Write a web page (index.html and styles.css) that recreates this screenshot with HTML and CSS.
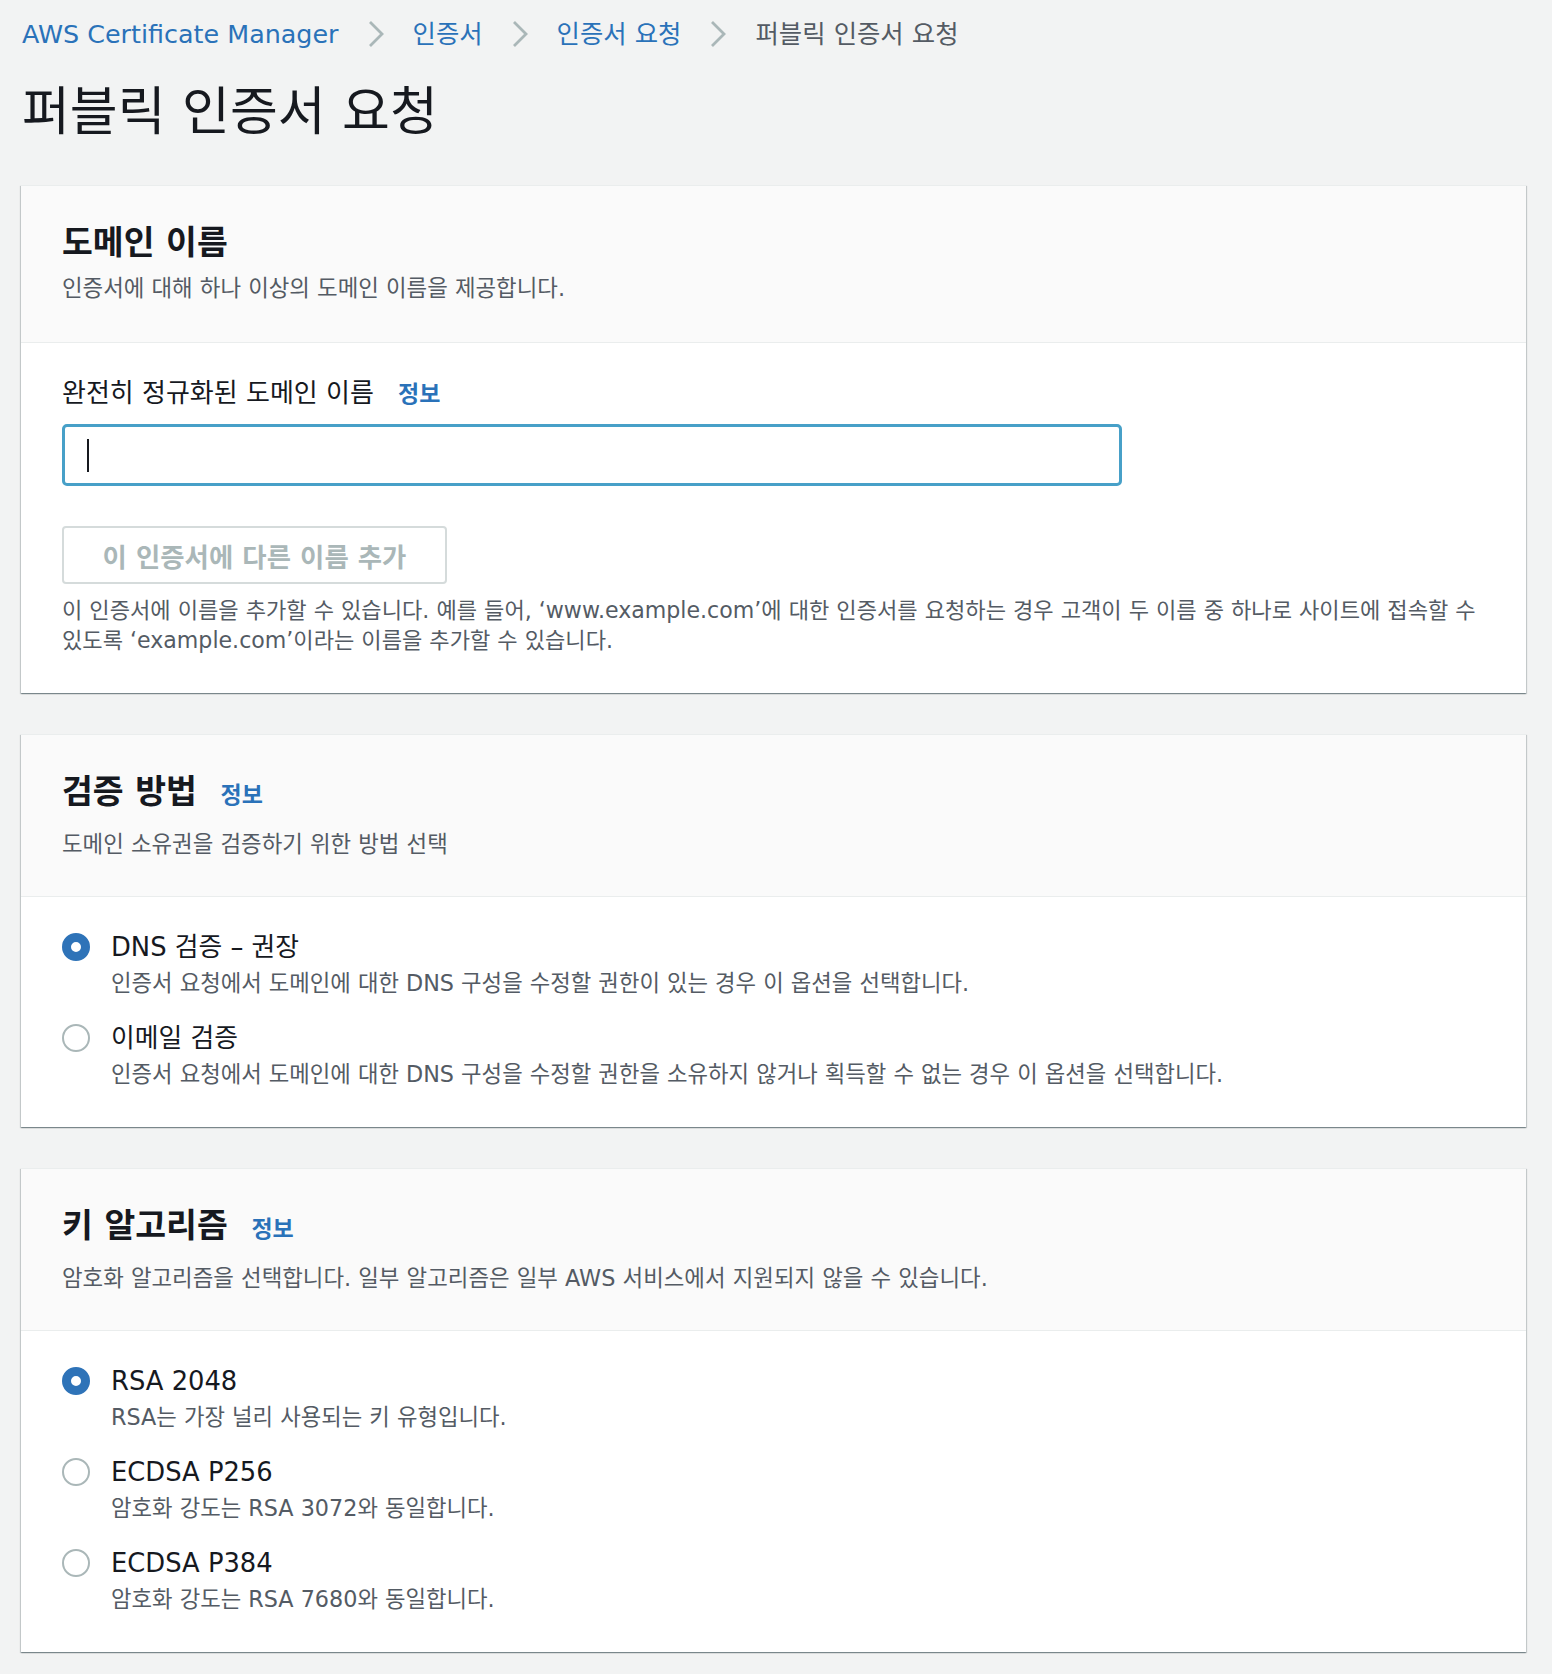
FILE: index.html
```html
<!DOCTYPE html>
<html lang="ko">
<head>
    <meta charset="UTF-8">
    <meta name="viewport" content="width=device-width, initial-scale=1.0">
    <title>퍼블릭 인증서 요청</title>
    <link rel="stylesheet" href="styles.css">
</head>
<body>
    <nav class="breadcrumb">
        <a href="#">AWS Certificate Manager</a>
        <svg class="chevron" viewBox="0 0 18 28"><polyline points="3,2 15,14 3,26" /></svg>
        <a href="#">인증서</a>
        <svg class="chevron" viewBox="0 0 18 28"><polyline points="3,2 15,14 3,26" /></svg>
        <a href="#">인증서 요청</a>
        <svg class="chevron" viewBox="0 0 18 28"><polyline points="3,2 15,14 3,26" /></svg>
        <span class="current">퍼블릭 인증서 요청</span>
    </nav>

    <h1 class="page-title">퍼블릭 인증서 요청</h1>

    <div class="card">
        <div class="card-header plain">
            <h2>도메인 이름</h2>
            <p class="desc">인증서에 대해 하나 이상의 도메인 이름을 제공합니다.</p>
        </div>
        <div class="card-body">
            <label class="field-label">완전히 정규화된 도메인 이름 <a class="info" href="#">정보</a></label>
            <div class="text-input"><span class="caret"></span></div>
            <button class="btn-disabled" disabled>이 인증서에 다른 이름 추가</button>
            <p class="help">이 인증서에 이름을 추가할 수 있습니다. 예를 들어, ‘www.example.com’에 대한 인증서를 요청하는 경우 고객이 두 이름 중 하나로 사이트에 접속할 수 있도록 ‘example.com’이라는 이름을 추가할 수 있습니다.</p>
        </div>
    </div>

    <div class="card">
        <div class="card-header">
            <h2>검증 방법 <a class="info" href="#">정보</a></h2>
            <p class="desc">도메인 소유권을 검증하기 위한 방법 선택</p>
        </div>
        <div class="card-body">
            <div class="radio-list">
                <div class="radio-item">
                    <span class="radio checked"></span>
                    <div>
                        <div class="radio-label">DNS 검증 – 권장</div>
                        <div class="radio-desc">인증서 요청에서 도메인에 대한 DNS 구성을 수정할 권한이 있는 경우 이 옵션을 선택합니다.</div>
                    </div>
                </div>
                <div class="radio-item">
                    <span class="radio"></span>
                    <div>
                        <div class="radio-label">이메일 검증</div>
                        <div class="radio-desc">인증서 요청에서 도메인에 대한 DNS 구성을 수정할 권한을 소유하지 않거나 획득할 수 없는 경우 이 옵션을 선택합니다.</div>
                    </div>
                </div>
            </div>
        </div>
    </div>

    <div class="card">
        <div class="card-header">
            <h2>키 알고리즘 <a class="info" href="#">정보</a></h2>
            <p class="desc">암호화 알고리즘을 선택합니다. 일부 알고리즘은 일부 AWS 서비스에서 지원되지 않을 수 있습니다.</p>
        </div>
        <div class="card-body">
            <div class="radio-list">
                <div class="radio-item">
                    <span class="radio checked"></span>
                    <div>
                        <div class="radio-label">RSA 2048</div>
                        <div class="radio-desc">RSA는 가장 널리 사용되는 키 유형입니다.</div>
                    </div>
                </div>
                <div class="radio-item">
                    <span class="radio"></span>
                    <div>
                        <div class="radio-label">ECDSA P256</div>
                        <div class="radio-desc">암호화 강도는 RSA 3072와 동일합니다.</div>
                    </div>
                </div>
                <div class="radio-item">
                    <span class="radio"></span>
                    <div>
                        <div class="radio-label">ECDSA P384</div>
                        <div class="radio-desc">암호화 강도는 RSA 7680와 동일합니다.</div>
                    </div>
                </div>
            </div>
        </div>
    </div>
</body>
</html>
```

FILE: styles.css
```css
body {
    margin: 0;
    padding: 17px 26px 20px 21px;
    background-color: #f2f3f3;
    color: #16191f;
    font-family: "DejaVu Sans", "Noto Sans CJK KR", sans-serif;
}

a {
    color: #2a72b9;
    text-decoration: none;
}

.breadcrumb {
    display: flex;
    align-items: center;
    gap: 28px;
    padding-left: 1px;
    font-size: 25.4px;
    line-height: 34px;
}
.breadcrumb .current {
    color: #545b64;
}
.chevron {
    width: 18px;
    height: 30px;
    fill: none;
    stroke: #aab7b8;
    stroke-width: 2.8;
}

.page-title {
    margin: 31px 0 43px 1px;
    font-size: 52px;
    font-weight: normal;
    line-height: 60px;
}

.card {
    margin-bottom: 41px;
    background-color: #fff;
    border-top: 1px solid #eaeded;
    box-shadow: 0 1px 1px 0 rgba(0, 28, 36, 0.3), 1px 1px 1px 0 rgba(0, 28, 36, 0.15), -1px 1px 1px 0 rgba(0, 28, 36, 0.15);
}
.card-header {
    padding: 35px 40px 37px 41px;
    background-color: #fafafa;
    border-bottom: 1px solid #eaeded;
}
.card-header h2 {
    margin: 0;
    font-size: 33.5px;
    font-weight: bold;
    line-height: 44px;
}
.card-header .desc {
    margin: 12px 0 0;
    color: #545b64;
    font-size: 22.4px;
    line-height: 30px;
}
.card-header.plain .desc {
    margin-top: 8px;
}
.card-header.plain {
    padding-bottom: 39px;
}

.info {
    margin-left: 12px;
    font-size: 23px;
    font-weight: bold;
}

.card-body {
    padding: 33px 30px 38px 41px;
}

.field-label {
    display: block;
    font-size: 26px;
    line-height: 34px;
}
.field-label .info {
    margin-left: 16px;
}

.text-input {
    display: flex;
    align-items: center;
    box-sizing: border-box;
    width: 1060px;
    height: 62px;
    margin-top: 13px;
    padding-left: 22px;
    border: 3px solid #47a0c8;
    border-radius: 5px;
    background-color: #fff;
}
.caret {
    width: 2px;
    height: 33px;
    background-color: #16191f;
}

.btn-disabled {
    display: block;
    box-sizing: border-box;
    width: 385px;
    height: 58px;
    margin-top: 40px;
    padding: 0;
    border: 2px solid #d5dbdb;
    border-radius: 4px;
    background-color: #fff;
    color: #aab7b8;
    font-family: inherit;
    font-size: 26.4px;
    font-weight: bold;
}

.help {
    margin: 11px 0 0;
    color: #545b64;
    font-size: 22.1px;
    line-height: 30px;
}

.radio-list {
    display: flex;
    flex-direction: column;
    gap: 23px;
}
.radio-item {
    display: flex;
    gap: 21px;
}
.radio {
    box-sizing: border-box;
    flex: none;
    width: 28px;
    height: 28px;
    margin-top: 3px;
    border: 2px solid #aab7b8;
    border-radius: 50%;
    background-color: #fff;
}
.radio.checked {
    border: 9px solid #2e73b8;
}
.radio-label {
    font-size: 25.8px;
    line-height: 34px;
}
.radio-desc {
    margin-top: 4px;
    color: #545b64;
    font-size: 22.3px;
    line-height: 30px;
}
```
